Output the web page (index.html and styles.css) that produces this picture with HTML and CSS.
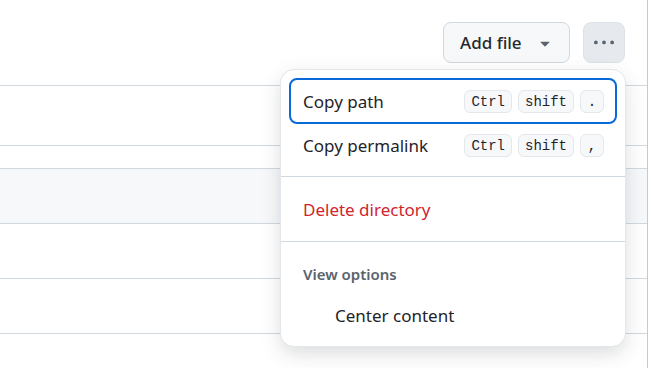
FILE: index.html
```html
<!DOCTYPE html>
<html lang="en">
<head>
    <meta charset="UTF-8">
    <title>Directory menu</title>
    <link rel="stylesheet" href="styles.css">
</head>
<body>
    <div class="page">
        <div class="toolbar">
            <button class="btn">
                Add file
                <svg class="caret" viewBox="0 0 16 16"><path d="m4.427 7.427 3.396 3.396a.25.25 0 0 0 .354 0l3.396-3.396A.25.25 0 0 0 11.396 7H4.604a.25.25 0 0 0-.177.427Z"/></svg>
            </button>
            <button class="btn btn-icon">
                <svg class="kebab" viewBox="0 0 16 16"><path d="M8 9a1.5 1.5 0 1 0 0-3 1.5 1.5 0 0 0 0 3ZM1.5 9a1.5 1.5 0 1 0 0-3 1.5 1.5 0 0 0 0 3Zm13 0a1.5 1.5 0 1 0 0-3 1.5 1.5 0 0 0 0 3Z"/></svg>
            </button>
        </div>

        <div class="rows">
            <div class="row first"></div>
        </div>
        <div class="rows second">
            <div class="row header"></div>
            <div class="row"></div>
            <div class="row"></div>
        </div>

        <div class="menu">
            <ul class="menu-group">
                <li class="item focused">
                    <span class="label">Copy path</span>
                    <span class="keys"><kbd>Ctrl</kbd><kbd>shift</kbd><kbd>.</kbd></span>
                </li>
                <li class="item short">
                    <span class="label">Copy permalink</span>
                    <span class="keys"><kbd>Ctrl</kbd><kbd>shift</kbd><kbd>,</kbd></span>
                </li>
            </ul>
            <div class="divider"></div>
            <ul class="menu-group">
                <li class="item danger"><span class="label">Delete directory</span></li>
            </ul>
            <div class="divider second"></div>
            <div class="group-title">View options</div>
            <ul class="menu-group">
                <li class="item indented"><span class="label">Center content</span></li>
            </ul>
        </div>
    </div>
</body>
</html>
```

FILE: styles.css
```css
* {
    margin: 0;
    padding: 0;
    box-sizing: border-box;
}

body {
    font-family: "Noto Sans", "Open Sans", sans-serif;
    color: #1f2328;
    background: #ffffff;
    padding-right: 3px;
    overflow: hidden;
}

.page {
    position: relative;
    width: 648px;
    height: 368px;
    border-right: 1px solid #c9c9c9;
}

.toolbar {
    display: flex;
    justify-content: flex-end;
    gap: 13px;
    padding: 22px 22px 0 0;
}

.btn {
    display: flex;
    align-items: center;
    width: 127px;
    height: 41px;
    padding: 0 0 0 16px;
    font-family: inherit;
    font-size: 17px;
    font-weight: 500;
    color: #25292e;
    background: #f6f8fa;
    border: 1px solid #d1d9e0;
    border-radius: 8px;
}

.caret {
    width: 20px;
    height: 20px;
    margin-left: auto;
    margin-right: 14px;
    fill: #59636e;
}

.btn-icon {
    width: 42px;
    padding: 0;
    justify-content: center;
    background: #e6eaef;
    border-color: #dde2e7;
}

.kebab {
    width: 20px;
    height: 20px;
    fill: #59636e;
}

.rows {
    margin-top: 22px;
}

.row {
    height: 55px;
    border-bottom: 1px solid #d1d9e0;
}

.row.first {
    height: 61px;
    border-top: 1px solid #d1d9e0;
}

.rows.second {
    margin-top: 22px;
    border-top: 1px solid #d1d9e0;
}

.row.header {
    height: 55px;
    background: #f6f8fa;
}

.menu {
    position: absolute;
    left: 280px;
    top: 69px;
    width: 346px;
    height: 278px;
    padding: 8px;
    background: #ffffff;
    border: 1px solid #e3e7eb;
    border-radius: 14px;
    box-shadow: 0 7px 15px -3px rgba(37, 41, 46, 0.05), 0 7px 22px 0 rgba(37, 41, 46, 0.12);
}

.menu-group {
    list-style: none;
}

.item {
    display: flex;
    align-items: center;
    justify-content: space-between;
    height: 46px;
    padding: 0 13px 0 14px;
    font-size: 17px;
    border-radius: 8px;
}

.item.short {
    height: 44px;
    padding-bottom: 2px;
}

.item.focused {
    outline: 2px solid #0969da;
    outline-offset: -2px;
}

.item.danger {
    color: #d1242f;
}

.item.indented {
    padding-left: 46px;
}

.keys {
    display: flex;
    gap: 6px;
}

kbd {
    display: inline-block;
    min-width: 24px;
    height: 23px;
    padding: 0 6px;
    font-family: "Liberation Mono", "DejaVu Sans Mono", monospace;
    font-size: 14px;
    line-height: 22px;
    text-align: center;
    color: #1f2328;
    background: #f6f8fa;
    border: 1px solid #e4e8ec;
    border-radius: 6px;
}

.divider {
    height: 1px;
    margin: 8px -8px 9px;
    background: #d1d9e0;
}

.divider.second {
    margin-top: 9px;
    margin-bottom: 0;
}

.group-title {
    padding: 22px 14px 0;
    margin-bottom: 8px;
    font-size: 15px;
    line-height: 20px;
    font-weight: 600;
    color: #59636e;
}
```
